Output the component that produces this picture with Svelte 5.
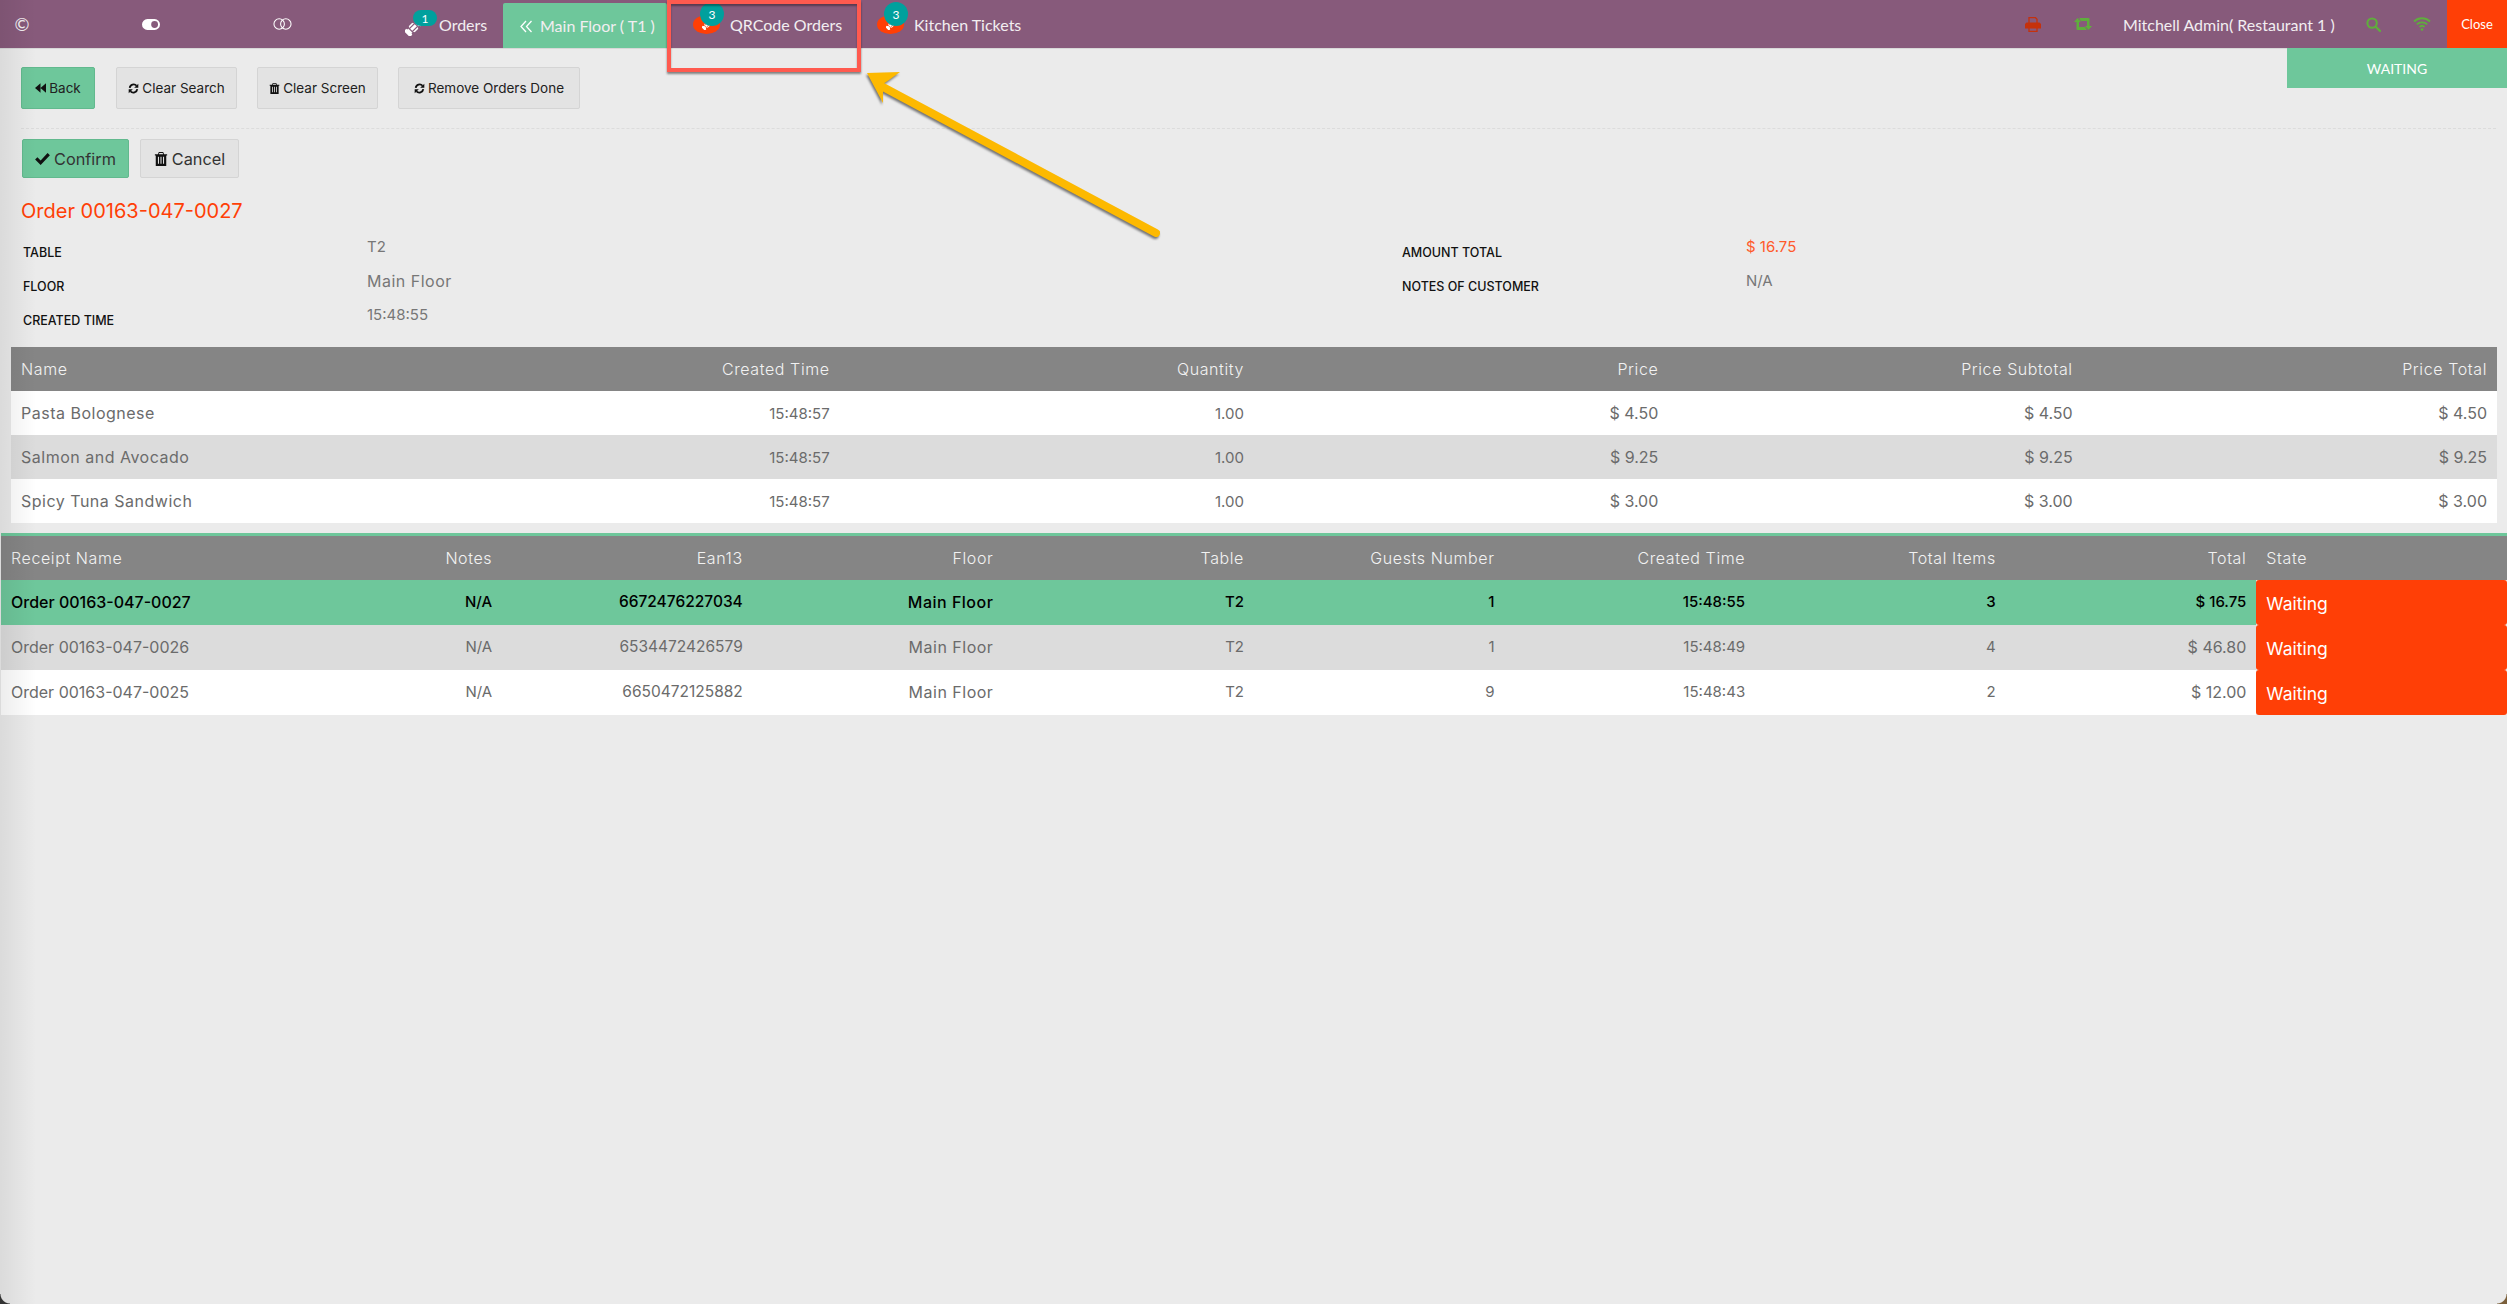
<script>
	const lines = [
		{ name: 'Pasta Bolognese', time: '15:48:57', qty: '1.00', price: '$ 4.50', sub: '$ 4.50', total: '$ 4.50' },
		{ name: 'Salmon and Avocado', time: '15:48:57', qty: '1.00', price: '$ 9.25', sub: '$ 9.25', total: '$ 9.25' },
		{ name: 'Spicy Tuna Sandwich', time: '15:48:57', qty: '1.00', price: '$ 3.00', sub: '$ 3.00', total: '$ 3.00' }
	];

	const orders = [
		{ name: 'Order 00163-047-0027', ean: '6672476227034', guests: 1, time: '15:48:55', items: 3, total: '$ 16.75', active: true },
		{ name: 'Order 00163-047-0026', ean: '6534472426579', guests: 1, time: '15:48:49', items: 4, total: '$ 46.80' },
		{ name: 'Order 00163-047-0025', ean: '6650472125882', guests: 9, time: '15:48:43', items: 2, total: '$ 12.00' }
	];
</script>

{#snippet ticket(size, cut)}
	<svg class="ticket" viewBox="0 0 20 20" width={size} height={size}>
		<g transform="rotate(45 10 10)">
			<path fill="#fff" d="M5 -1h10v4a2 2 0 0 0 0 4v6a2 2 0 0 0 0 4v4H5v-4a2 2 0 0 0 0-4V7a2 2 0 0 0 0-4z" />
			<rect x="7.500" y="5.500" width="5" height="9" fill="none" stroke={cut} stroke-width="1.400" />
		</g>
	</svg>
{/snippet}

{#snippet refresh()}
	<svg class="ico" viewBox="0 0 16 16" width="11" height="11">
		<path fill="none" stroke="currentColor" stroke-width="2.600" d="M2.500 7A5.700 5.700 0 0 1 12.500 4M13.500 9A5.700 5.700 0 0 1 3.500 12" />
		<path d="M15 1v6H9zM1 15V9h6z" />
	</svg>
{/snippet}

{#snippet trash(size)}
	<svg class="ico" viewBox="0 0 14 16" width={size} height={size}>
		<path fill-rule="evenodd" d="M4.500 0h5l1 2.500H14V4h-1v12H1V4H0V2.500h3.500zM5 1.200L4.700 2.500h4.600L9 1.200zM3.500 5.500v8h1.200v-8zM6.400 5.500v8h1.200v-8zM9.300 5.500v8h1.200v-8z" />
	</svg>
{/snippet}

<div class="page">
	<header class="topbar">
		<span class="copy">©</span>
		<svg class="toggle-on" viewBox="0 0 20 12" width="18" height="11">
			<path fill="#fff" fill-rule="evenodd" d="M6 0h8a6 6 0 0 1 0 12H6A6 6 0 0 1 6 0zm8 2.200a3.800 3.800 0 1 0 0 7.600 3.800 3.800 0 0 0 0-7.600z" />
		</svg>
		<svg class="circles" viewBox="0 0 20 12" width="19" height="12">
			<circle cx="6.500" cy="6" r="5.500" fill="none" stroke="#fff" stroke-width="1.100" />
			<circle cx="13.500" cy="6" r="5.500" fill="none" stroke="#fff" stroke-width="1.100" />
		</svg>

		<div class="nav-item orders">
			<span class="plain-ticket">{@render ticket(17, '#875a7b')}</span>
			<span class="count">1</span>
			<span class="orders-label">Orders</span>
		</div>
		<div class="nav-item floor">
			<svg viewBox="0 0 14 14" width="14" height="14">
				<path fill="none" stroke="#fff" stroke-width="1.300" d="M7 2L2 7.500 7 13M12.500 2L7.500 7.500 12.500 13" />
			</svg>
			<span>Main Floor ( T1 )</span>
		</div>
		<div class="nav-item qr">
			<span class="blob">{@render ticket(10, '#ff3f06')}</span>
			<span class="count">3</span>
			<span>QRCode Orders</span>
		</div>
		<div class="nav-item kitchen">
			<span class="blob">{@render ticket(10, '#ff3f06')}</span>
			<span class="count">3</span>
			<span>Kitchen Tickets</span>
		</div>

		<div class="status">
			<svg class="print" viewBox="0 0 16 15" width="16" height="15">
				<path fill="none" stroke="#c5310c" stroke-width="1.300" d="M4 6V.700h6.500L12 2.200V6M4 11v3.300h8V11" />
				<path fill="#c5310c" d="M1.500 5.500h13L16 7v4.500H0V7z" />
			</svg>
			<svg class="retweet" viewBox="0 0 18 12" width="18" height="12">
				<path fill="#5fae3c" d="M3.500 0L7 4H5v5h6l2 3H3.500a1 1 0 0 1-1-1V4H0zM5 0h9.500a1 1 0 0 1 1 1v7H18l-3.500 4L11 8h2V3H7z" />
			</svg>
			<span class="user">Mitchell Admin( Restaurant 1 )</span>
			<svg class="search" viewBox="0 0 16 16" width="15" height="15">
				<circle cx="6.500" cy="6.500" r="5" fill="none" stroke="#5fae3c" stroke-width="2.200" />
				<path stroke="#5fae3c" stroke-width="2.400" stroke-linecap="round" d="M10.500 10.500L15 15" />
			</svg>
			<svg class="wifi" viewBox="0 0 18 14" width="18" height="14">
				<g fill="none" stroke="#5fae3c" stroke-width="1.800">
					<path d="M1 4.500a11.500 11.500 0 0 1 16 0" />
					<path d="M3.800 7.400a7.500 7.500 0 0 1 10.400 0" />
					<path d="M6.500 10a3.600 3.600 0 0 1 5 0" />
				</g>
				<circle cx="9" cy="12.500" r="1.300" fill="#5fae3c" />
			</svg>
			<div class="close">Close</div>
		</div>
	</header>

	<div class="waiting">WAITING</div>

	<div class="toolbar">
		<button class="btn green back">
			<svg class="ico" viewBox="0 0 16 14" width="11" height="10"><path d="M8 0v14L0 7zM16 0v14L8 7z" /></svg>
			Back
		</button>
		<button class="btn search-btn">{@render refresh()} Clear Search</button>
		<button class="btn screen-btn">{@render trash(11)} Clear Screen</button>
		<button class="btn done-btn">{@render refresh()} Remove Orders Done</button>
	</div>

	<div class="actions">
		<button class="btn big green confirm">
			<svg class="ico" viewBox="0 0 16 13" width="15" height="12"><path d="M0 7l2.500-2.500L6 8l7.500-8L16 2.500 6 13z" /></svg>
			Confirm
		</button>
		<button class="btn big cancel">{@render trash(14)} Cancel</button>
	</div>

	<h1 class="title">Order 00163-047-0027</h1>

	<div class="details">
		<div class="label">TABLE</div>
		<div class="value">T2</div>
		<div class="label">AMOUNT TOTAL</div>
		<div class="value amount">$ 16.75</div>
		<div class="label">FLOOR</div>
		<div class="value word">Main Floor</div>
		<div class="label">NOTES OF CUSTOMER</div>
		<div class="value">N/A</div>
		<div class="label">CREATED TIME</div>
		<div class="value">15:48:55</div>
	</div>

	<table class="lines">
		<thead>
			<tr>
				<th class="left">Name</th>
				<th>Created Time</th>
				<th>Quantity</th>
				<th>Price</th>
				<th>Price Subtotal</th>
				<th>Price Total</th>
			</tr>
		</thead>
		<tbody>
			{#each lines as line}
				<tr>
					<td class="left word">{line.name}</td>
					<td>{line.time}</td>
					<td>{line.qty}</td>
					<td class="money">{line.price}</td>
					<td class="money">{line.sub}</td>
					<td class="money">{line.total}</td>
				</tr>
			{/each}
		</tbody>
	</table>

	<table class="orders-table">
		<thead>
			<tr>
				<th class="left">Receipt Name</th>
				<th>Notes</th>
				<th>Ean13</th>
				<th>Floor</th>
				<th>Table</th>
				<th>Guests Number</th>
				<th>Created Time</th>
				<th>Total Items</th>
				<th>Total</th>
				<th class="left">State</th>
			</tr>
		</thead>
		<tbody>
			{#each orders as order}
				<tr class:active={order.active}>
					<td class="left receipt">{order.name}</td>
					<td>N/A</td>
					<td class="ean">{order.ean}</td>
					<td class="word">Main Floor</td>
					<td>T2</td>
					<td>{order.guests}</td>
					<td>{order.time}</td>
					<td>{order.items}</td>
					<td class="money">{order.total}</td>
					<td class="left state">Waiting</td>
				</tr>
			{/each}
		</tbody>
	</table>

	<!-- annotation drawn over the screenshot -->
	<div class="callout"></div>
	<svg class="arrow" viewBox="0 0 320 180" width="320" height="180">
		<path d="M27 10L60 9 49 17 43 21 43 40z" fill="#fdb900" />
		<path d="M43 24L316 170" stroke="#fdb900" stroke-width="8" stroke-linecap="round" fill="none" />
	</svg>
	<div class="edge"></div>
	<div class="corner bl"></div>
	<div class="corner br"></div>
</div>

<style>
	:global(body) {
		margin: 0;
		background: #ebebeb;
	}

	.page {
		position: relative;
		height: 1304px;
		overflow: hidden;
		background: #ebebeb;
		font-family: Inter, 'Liberation Sans', sans-serif;
		color: #6b6b6b;
	}

	.topbar {
		display: flex;
		align-items: center;
		height: 48px;
		border-bottom: 1px solid #d8d8d8;
		background: #875a7b;
		font-family: Lato, 'Liberation Sans', sans-serif;
		font-size: 16px;
		color: #f2eef1;
	}

	.copy {
		width: 44px;
		text-align: center;
		font-size: 18px;
	}

	.toggle-on {
		margin-left: 98px;
	}

	.circles {
		margin-left: 113px;
	}

	.nav-item {
		position: relative;
		display: flex;
		align-items: center;
		box-sizing: border-box;
		height: 48px;
	}

	.orders {
		width: 112px;
		margin-left: 100px;
		padding-left: 13px;
	}

	.plain-ticket {
		display: flex;
		margin-top: 6px;
	}

	.orders-label {
		margin-left: 17px;
	}

	.ticket {
		flex: none;
	}

	.floor {
		align-self: flex-end;
		gap: 7px;
		width: 164px;
		height: 45px;
		margin-left: -1px;
		padding-left: 16px;
		background: #6ec79b;
		border-radius: 2px 2px 0 0;
	}

	.qr {
		width: 210px;
		padding-left: 26px;
	}

	.kitchen {
		flex: 1;
	}

	.blob {
		display: flex;
		align-items: center;
		justify-content: center;
		width: 27px;
		height: 19px;
		padding-top: 2px;
		box-sizing: border-box;
		border-radius: 50%;
		background: #ff3f06;
		margin-right: 10px;
	}

	.count {
		position: absolute;
		display: flex;
		align-items: center;
		justify-content: center;
		width: 24px;
		height: 24px;
		border-radius: 50%;
		background: #00a09d;
		font-size: 12px;
		color: #fff;
	}

	.orders .count {
		left: 21px;
		top: 10px;
		width: 24px;
		height: 16px;
		border-radius: 10px;
	}

	.qr .count {
		left: 33px;
		top: 2px;
	}

	.kitchen .count {
		left: 7px;
		top: 2px;
	}

	.status {
		display: flex;
		align-items: center;
		height: 48px;
	}

	.user {
		margin-left: 31px;
		width: 212px;
	}

	.search {
		margin-left: 31px;
	}

	.wifi {
		margin-left: 32px;
	}

	.retweet {
		margin-left: 33px;
	}

	.close {
		display: flex;
		align-items: center;
		justify-content: center;
		width: 60px;
		height: 48px;
		margin-left: 16px;
		background: #ff3f06;
		font-size: 13px;
		color: #fff;
	}

	.waiting {
		position: absolute;
		top: 48px;
		right: 0;
		display: flex;
		align-items: center;
		justify-content: center;
		width: 220px;
		height: 40px;
		background: #6ec79b;
		font-family: Lato, 'Liberation Sans', sans-serif;
		font-size: 14px;
		color: #fff;
	}

	.toolbar {
		display: flex;
		gap: 20px;
		margin: 0 11px 0 21px;
		padding: 18px 0 19px;
		border-bottom: 1px dashed #dcdcdc;
	}

	.btn {
		display: inline-flex;
		align-items: center;
		justify-content: center;
		gap: 3px;
		box-sizing: border-box;
		height: 42px;
		padding: 0;
		border: 1px solid #d4d4d4;
		border-radius: 2px;
		background: #e3e3e3;
		font-family: inherit;
		font-size: 13.500px;
		color: #212121;
	}

	.btn.green {
		background: #6ec79b;
		border-color: #62b98e;
	}

	.back {
		width: 74px;
		margin-right: 1px;
	}

	.search-btn,
	.screen-btn {
		width: 121px;
	}

	.done-btn {
		width: 182px;
	}

	.btn.big {
		gap: 4px;
		height: 39px;
		font-size: 16.300px;
		color: #333;
	}

	.confirm {
		width: 107px;
	}

	.cancel {
		width: 99px;
	}

	.ico {
		fill: currentColor;
		color: #111;
		flex: none;
	}

	.actions {
		display: flex;
		gap: 11px;
		margin: 10px 0 0 22px;
	}

	.title {
		margin: 19px 0 0 21px;
		font-size: 20px;
		font-weight: 400;
		line-height: 28px;
		color: #ff3f06;
	}

	.details {
		display: grid;
		grid-template-columns: 344px 1035px 344px 1fr;
		grid-auto-rows: 34px;
		margin: 10px 0 0 23px;
		height: 112px;
	}

	.label {
		padding-top: 10px;
		font-size: 12.500px;
		font-weight: 500;
		line-height: 15px;
		color: #111;
	}

	.value {
		padding-top: 2px;
		font-size: 15px;
		line-height: 20px;
		color: #777;
	}

	.value.amount {
		color: #ff5a2a;
	}

	.value.word {
		font-size: 16px;
		letter-spacing: 0.500px;
	}

	table {
		table-layout: fixed;
		border-collapse: separate;
		border-spacing: 0;
		font-size: 15px;
	}

	th {
		height: 44px;
		padding: 0 10px;
		background: #858585;
		font-size: 16px;
		font-weight: 300;
		letter-spacing: 0.600px;
		text-align: right;
		color: #f2f2f2;
	}

	td {
		padding: 0 10px;
		text-align: right;
		background: #fff;
	}

	td.word {
		font-size: 16px;
		letter-spacing: 0.500px;
	}

	td.receipt,
	td.money {
		font-size: 16px;
	}

	td.ean {
		font-size: 15.500px;
	}

	.left {
		text-align: left;
	}

	.lines {
		width: 2486px;
		margin: 0 0 0 11px;
	}

	.lines td {
		height: 44px;
	}

	.lines tbody tr:nth-child(2) td,
	.orders-table tbody tr:nth-child(2) td {
		background: #dcdcdc;
	}

	.orders-table {
		width: 2506px;
		margin: 10px 0 0 1px;
		border-top: 3px solid #6ec79b;
	}

	.orders-table td {
		box-sizing: border-box;
		height: 45px;
		padding-bottom: 2px;
	}

	.orders-table tr.active td {
		background: #6ec79b;
		color: #000;
		font-weight: 500;
	}

	.orders-table tr.active td.money {
		font-size: 15px;
	}

	.orders-table td.state,
	.orders-table tbody tr:nth-child(2) td.state,
	.orders-table tr.active td.state {
		padding: 2px 10px 0;
		background: #ff3f06;
		border-radius: 3px;
		font-size: 17.500px;
		font-weight: 400;
		color: #fff;
	}

	.callout {
		position: absolute;
		left: 667px;
		top: 0;
		width: 194px;
		height: 72px;
		box-sizing: border-box;
		border: 4px solid #ff5a4f;
		box-shadow: 0 2px 2px rgba(0, 0, 0, 0.45), inset 0 2px 2px rgba(0, 0, 0, 0.35);
	}

	.arrow {
		position: absolute;
		left: 840px;
		top: 63px;
		filter: drop-shadow(-1px 2px 1px rgba(0, 0, 0, 0.5));
	}

	.edge {
		position: absolute;
		inset: 0 auto 0 0;
		width: 36px;
		background: linear-gradient(to right, rgba(0, 0, 0, 0.07), rgba(0, 0, 0, 0));
		pointer-events: none;
	}

	.corner {
		position: absolute;
		bottom: 0;
		width: 10px;
		height: 10px;
	}

	.corner.bl {
		left: 0;
		background: radial-gradient(circle at 10px 0, transparent 9px, #333 10px);
	}

	.corner.br {
		right: 0;
		background: radial-gradient(circle at 0 0, transparent 9px, #7a5f3a 10px);
	}
</style>
